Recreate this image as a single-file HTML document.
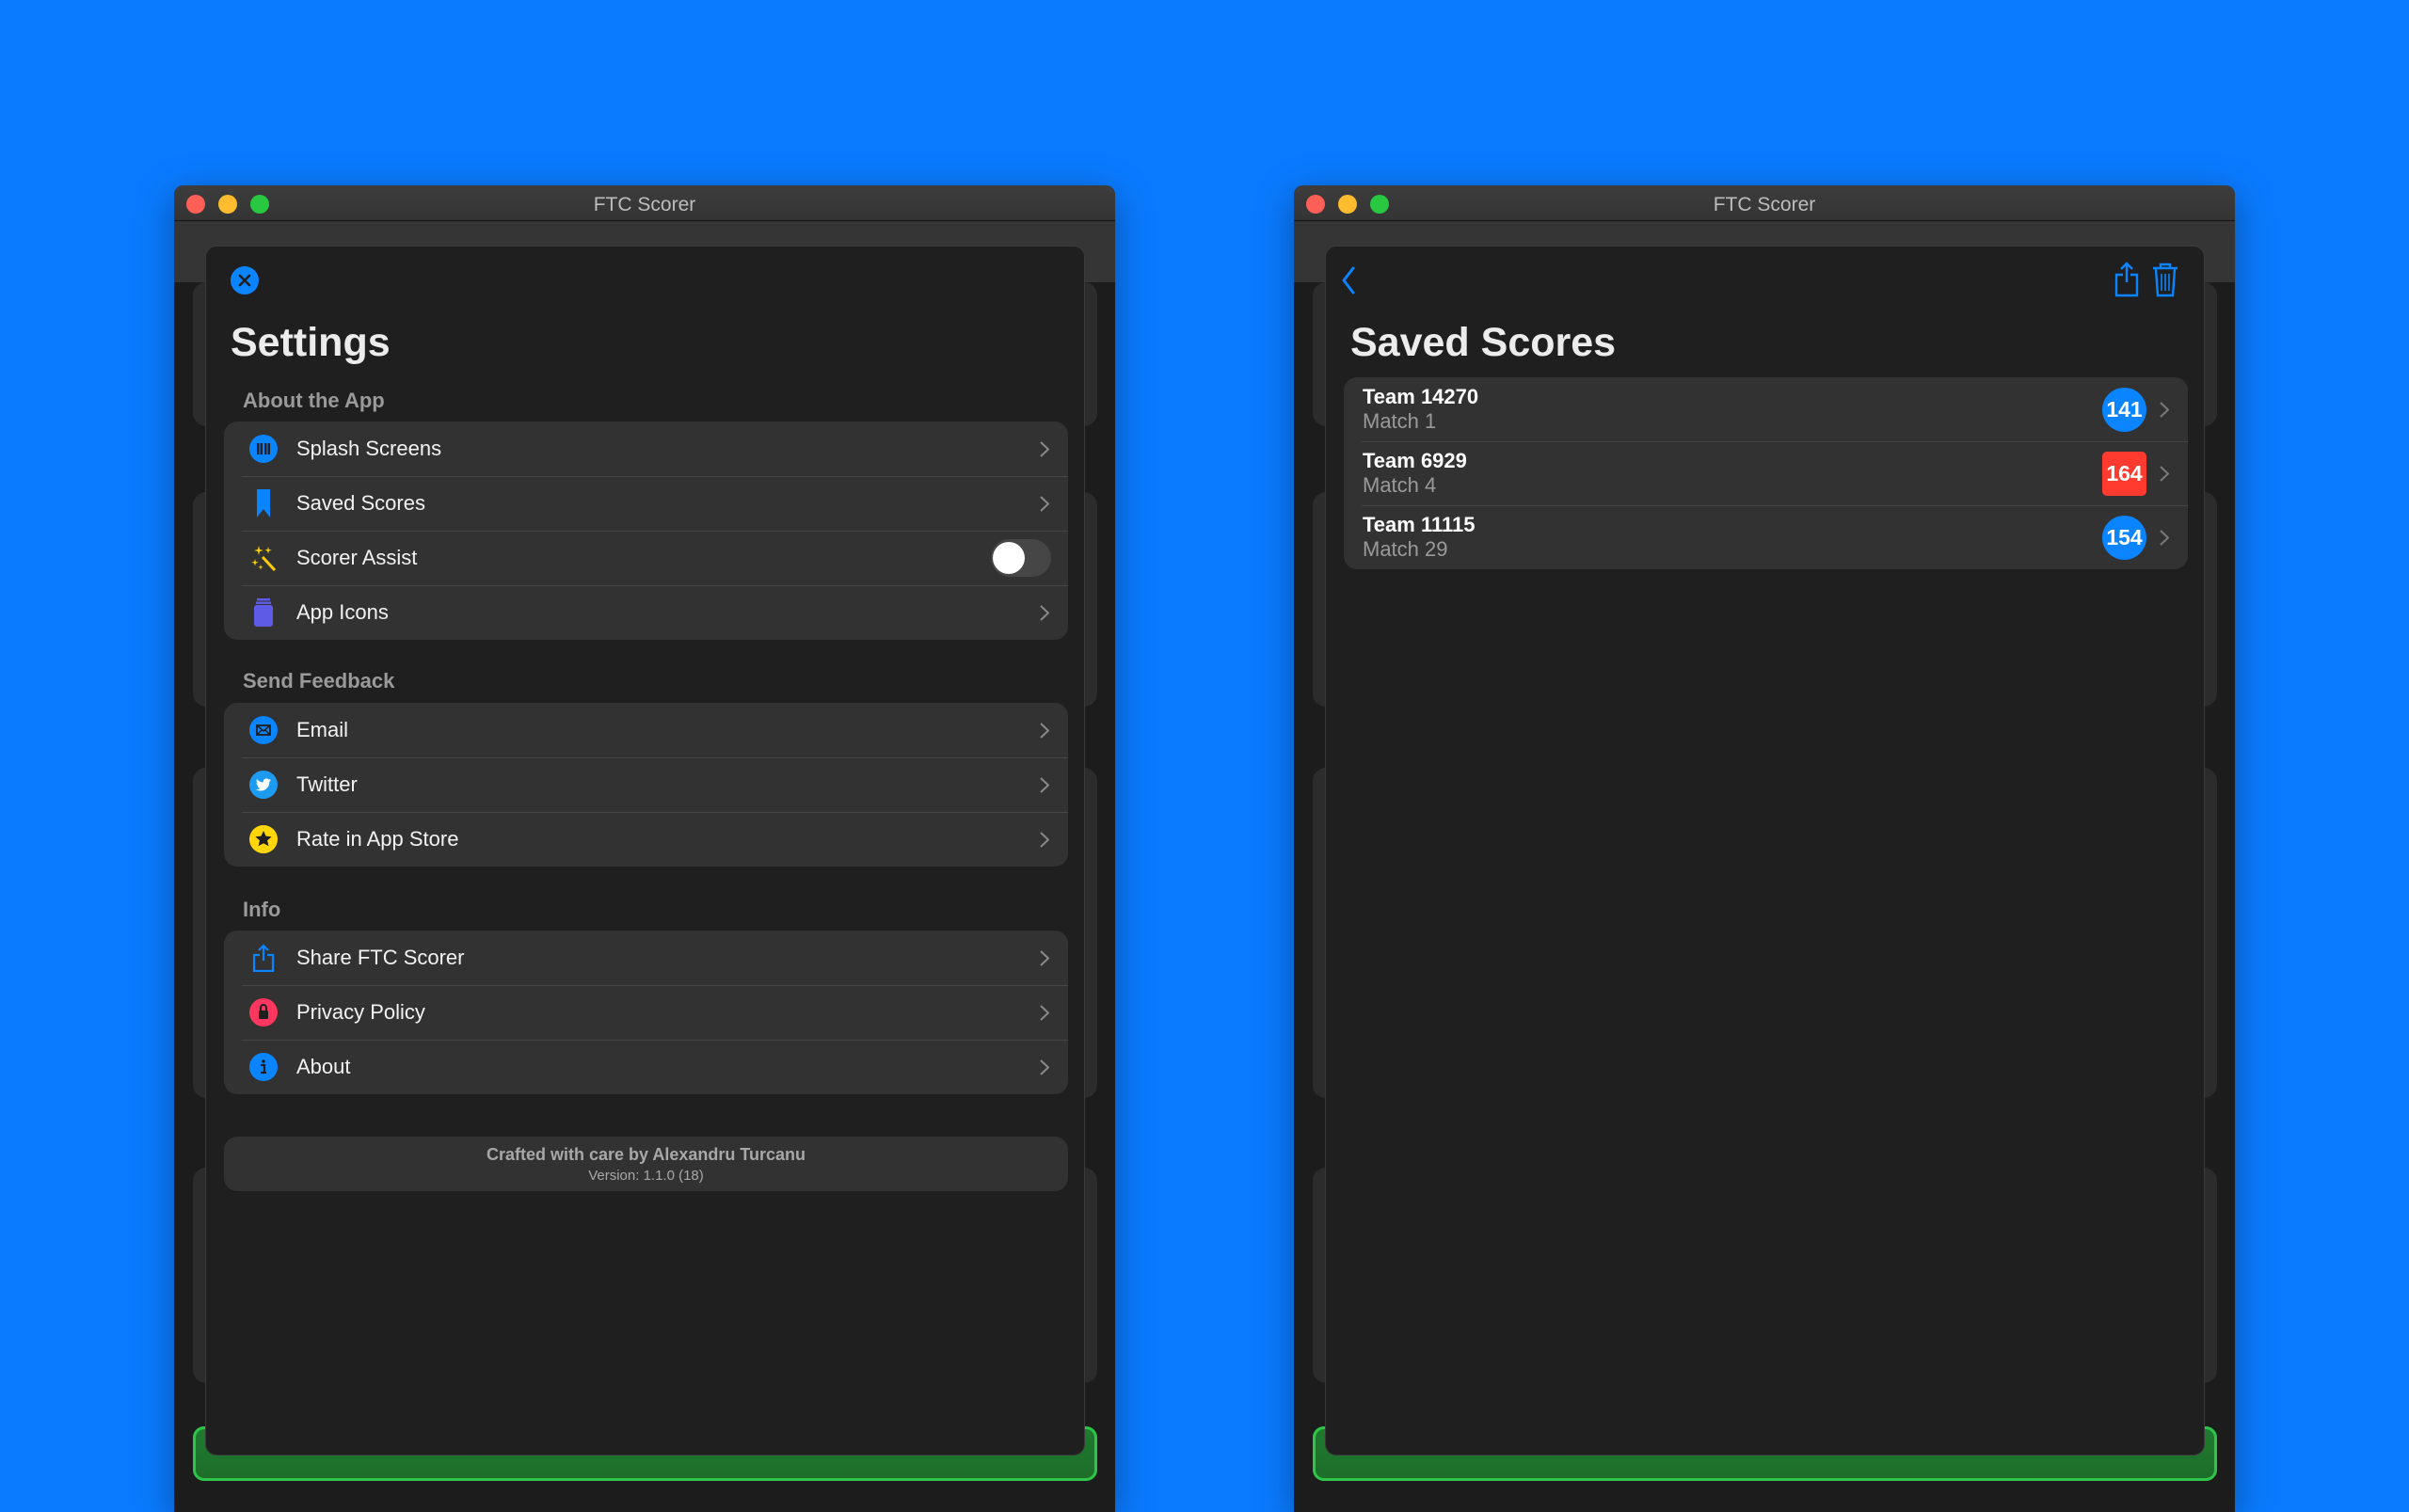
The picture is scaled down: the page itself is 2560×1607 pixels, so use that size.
<!DOCTYPE html>
<html><head><meta charset="utf-8"><style>
*{box-sizing:border-box;margin:0;padding:0}
body{width:2560px;height:1600px;background:#0a7bff;position:relative;overflow:hidden;font-family:"Liberation Sans",sans-serif}
.win{position:absolute;top:197px;width:1000px;height:1410px;background:#1c1c1c;border-radius:10px 10px 0 0;overflow:hidden;box-shadow:0 10px 40px rgba(0,0,0,.35)}
.tb{position:absolute;left:0;top:0;width:100%;height:38px;background:linear-gradient(#3d3d3d,#343434);border-bottom:1px solid #151515;color:#bdbdbd;font-size:21px;text-align:center;line-height:42px}
.dot{position:absolute;top:10px;width:20px;height:20px;border-radius:50%}
.tool{position:absolute;left:0;top:38px;width:100%;height:65px;background:#353535}
.card{position:absolute;left:20px;width:961px;background:#2c2c2c;border-radius:14px}
.green{position:absolute;left:20px;top:1319px;width:961px;height:58px;background:linear-gradient(#1f7a2e,#1d6e2a);border-radius:12px;box-shadow:inset 0 0 0 3px #2fc44a}
.sheet{position:absolute;left:33px;top:64px;width:935px;height:1286px;background:#1f1f1f;border-radius:12px;border:1px solid #3a3a3a}
.h1{position:absolute;left:26px;color:#ececec;font-weight:bold;font-size:43px}
.lab{position:absolute;left:39px;color:#9a9a9a;font-size:22px;font-weight:bold}
.grp{position:absolute;left:19px;width:897px;background:#323232;border-radius:14px;overflow:hidden}
.row{position:relative;height:58px;color:#f2f2f2;font-size:22px;line-height:58px;padding-left:77px}
.row+.row:before{content:"";position:absolute;left:19px;right:0;top:0;border-top:1px solid #454545}
.ic{position:absolute;left:27px;top:14px;width:30px;height:30px}
.chev{position:absolute;right:20px;top:21px;width:10px;height:17px}
.srow{position:relative;height:68px;padding-left:20px}
.srow+.srow:before{content:"";position:absolute;left:19px;right:0;top:0;border-top:1px solid #454545}
.t1{position:absolute;top:8px;color:#fff;font-weight:bold;font-size:22px}
.t2{position:absolute;top:34px;color:#9a9a9a;font-size:22px}
.badge{position:absolute;left:806px;top:11px;width:47px;height:47px;border-radius:50%;background:#0a84ff;color:#fff;font-weight:bold;font-size:23px;text-align:center;line-height:47px}
</style></head><body>

<!-- LEFT WINDOW -->
<div class="win" style="left:185px">
 <div class="tb">FTC Scorer
  <div class="dot" style="left:13px;background:#fe5f57"></div>
  <div class="dot" style="left:47px;background:#febc2e"></div>
  <div class="dot" style="left:81px;background:#28c840"></div>
 </div>
 <div class="tool"></div>
 <div class="card" style="top:103px;height:153px"></div>
 <div class="card" style="top:326px;height:228px"></div>
 <div class="card" style="top:619px;height:351px"></div>
 <div class="card" style="top:1044px;height:229px"></div>
 <div class="green"></div>
 <div class="sheet">
  <svg style="position:absolute;left:25px;top:20px" width="32" height="32" viewBox="0 0 32 32"><circle cx="16" cy="16" r="15" fill="#0a84ff"/><path d="M11 11L21 21M21 11L11 21" stroke="#1f1f1f" stroke-width="2.6" stroke-linecap="round"/></svg>
  <div class="h1" style="top:78px">Settings</div>
  <div class="lab" style="top:151px">About the App</div>
  <div class="grp" style="top:186px">
   <div class="row"><svg class="ic" viewBox="0 0 30 30"><circle cx="15" cy="15" r="15" fill="#0a84ff"/><path d="M8 9h6v12H8zM16 9h6v12h-6z" fill="#1f1f1f" /><path d="M11 9v12M19 9v12" stroke="#0a84ff" stroke-width="1.2"/></svg>Splash Screens<svg class="chev" viewBox="0 0 10 17"><path d="M1 1l8 7.5L1 16" fill="none" stroke="#8a8a8a" stroke-width="2"/></svg></div>
   <div class="row"><svg class="ic" viewBox="0 0 30 30"><path d="M8 0h14v30l-7-9-7 9z" fill="#0a84ff"/></svg>Saved Scores<svg class="chev" viewBox="0 0 10 17"><path d="M1 1l8 7.5L1 16" fill="none" stroke="#8a8a8a" stroke-width="2"/></svg></div>
   <div class="row"><svg class="ic" viewBox="0 0 30 30"><path d="M14 14l13 14" stroke="#ffcc00" stroke-width="3"/><g fill="#ffd60a"><path d="M10 2l1 4 4 1-4 1-1 4-1-4-4-1 4-1z"/><path d="M20 3l.8 3 3 .8-3 .8-.8 3-.8-3-3-.8 3-.8z"/><path d="M6 16l.8 3 3 .8-3 .8-.8 3-.8-3-3-.8 3-.8z"/><path d="M12 22l.6 2.2 2.2.6-2.2.6-.6 2.2-.6-2.2-2.2-.6 2.2-.6z"/></g></svg>Scorer Assist
    <div style="position:absolute;right:18px;top:9px;width:64px;height:40px;border-radius:20px;background:#464646"><div style="position:absolute;left:2px;top:3px;width:34px;height:34px;border-radius:50%;background:#fff"></div></div></div>
   <div class="row"><svg class="ic" viewBox="0 0 30 30"><rect x="5" y="7" width="20" height="23" rx="3" fill="#5e5ce6"/><rect x="8" y="0" width="14" height="2.5" fill="#5e5ce6"/><rect x="7" y="3.5" width="16" height="2.5" fill="#5e5ce6"/></svg>App Icons<svg class="chev" viewBox="0 0 10 17"><path d="M1 1l8 7.5L1 16" fill="none" stroke="#8a8a8a" stroke-width="2"/></svg></div>
  </div>
  <div class="lab" style="top:449px">Send Feedback</div>
  <div class="grp" style="top:485px">
   <div class="row"><svg class="ic" viewBox="0 0 30 30"><circle cx="15" cy="15" r="15" fill="#0a84ff"/><rect x="8" y="10" width="14" height="10" fill="none" stroke="#1f1f1f" stroke-width="1.8"/><path d="M8 10l7 6 7-6M8 20l5-5M22 20l-5-5" fill="none" stroke="#1f1f1f" stroke-width="1.5"/></svg>Email<svg class="chev" viewBox="0 0 10 17"><path d="M1 1l8 7.5L1 16" fill="none" stroke="#8a8a8a" stroke-width="2"/></svg></div>
   <div class="row"><svg class="ic" viewBox="0 0 30 30"><circle cx="15" cy="15" r="15" fill="#1d9bf0"/><path d="M23 10c-.6.3-1.2.4-1.9.5.7-.4 1.2-1 1.4-1.8-.6.4-1.3.6-2.1.8a3.3 3.3 0 0 0-5.600 3c-2.7-.1-5.100-1.400-6.800-3.400-.9 1.5-.4 3.4 1 4.4-.5 0-1-.2-1.5-.4 0 1.6 1.1 3 2.6 3.2-.5.1-1 .2-1.5.1.4 1.3 1.6 2.3 3.1 2.3A6.6 6.6 0 0 1 7 20c1.5.9 3.2 1.5 5 1.5 6.1 0 9.5-5.1 9.3-9.7.7-.5 1.2-1 1.7-1.8z" fill="#fff"/></svg>Twitter<svg class="chev" viewBox="0 0 10 17"><path d="M1 1l8 7.5L1 16" fill="none" stroke="#8a8a8a" stroke-width="2"/></svg></div>
   <div class="row"><svg class="ic" viewBox="0 0 30 30"><circle cx="15" cy="15" r="15" fill="#ffd60a"/><path d="M15 6l2.6 5.6 6 .6-4.5 4 1.3 6L15 19.2 9.6 22.2l1.3-6-4.5-4 6-.6z" fill="#1f1f1f"/></svg>Rate in App Store<svg class="chev" viewBox="0 0 10 17"><path d="M1 1l8 7.5L1 16" fill="none" stroke="#8a8a8a" stroke-width="2"/></svg></div>
  </div>
  <div class="lab" style="top:692px">Info</div>
  <div class="grp" style="top:727px">
   <div class="row"><svg class="ic" viewBox="0 0 30 30"><path d="M15 2v16M10 7l5-5 5 5" fill="none" stroke="#0a84ff" stroke-width="2.2"/><path d="M11 12H5v17h20V12h-6" fill="none" stroke="#0a84ff" stroke-width="2.2"/></svg>Share FTC Scorer<svg class="chev" viewBox="0 0 10 17"><path d="M1 1l8 7.5L1 16" fill="none" stroke="#8a8a8a" stroke-width="2"/></svg></div>
   <div class="row"><svg class="ic" viewBox="0 0 30 30"><circle cx="15" cy="15" r="15" fill="#ff375f"/><rect x="10" y="13" width="10" height="9" rx="1.5" fill="#1f1f1f"/><path d="M12 13v-3a3 3 0 0 1 6 0v3" fill="none" stroke="#1f1f1f" stroke-width="2"/></svg>Privacy Policy<svg class="chev" viewBox="0 0 10 17"><path d="M1 1l8 7.5L1 16" fill="none" stroke="#8a8a8a" stroke-width="2"/></svg></div>
   <div class="row"><svg class="ic" viewBox="0 0 30 30"><circle cx="15" cy="15" r="15" fill="#0a84ff"/><circle cx="15" cy="9" r="1.8" fill="#1f1f1f"/><path d="M12 13h4v8h2M12 21h6" fill="none" stroke="#1f1f1f" stroke-width="2.2"/></svg>About<svg class="chev" viewBox="0 0 10 17"><path d="M1 1l8 7.5L1 16" fill="none" stroke="#8a8a8a" stroke-width="2"/></svg></div>
  </div>
  <div class="grp" style="top:946px;height:58px;text-align:center;color:#a8a8a8">
   <div style="font-weight:bold;font-size:18px;margin-top:9px">Crafted with care by Alexandru Turcanu</div>
   <div style="font-size:15px;margin-top:3px">Version: 1.1.0 (18)</div>
  </div>
 </div>
</div>

<!-- RIGHT WINDOW -->
<div class="win" style="left:1375px">
 <div class="tb">FTC Scorer
  <div class="dot" style="left:13px;background:#fe5f57"></div>
  <div class="dot" style="left:47px;background:#febc2e"></div>
  <div class="dot" style="left:81px;background:#28c840"></div>
 </div>
 <div class="tool"></div>
 <div class="card" style="top:103px;height:153px"></div>
 <div class="card" style="top:326px;height:228px"></div>
 <div class="card" style="top:619px;height:351px"></div>
 <div class="card" style="top:1044px;height:229px"></div>
 <div class="green"></div>
 <div class="sheet">
  <svg style="position:absolute;left:16px;top:20px" width="16" height="32" viewBox="0 0 16 32"><path d="M13 3L3 16l10 13" fill="none" stroke="#0a84ff" stroke-width="3" stroke-linecap="round" stroke-linejoin="round"/></svg>
  <svg style="position:absolute;left:837px;top:16px" width="28" height="38" viewBox="0 0 28 38"><path d="M14 2v20M8 8l6-6 6 6" fill="none" stroke="#0a84ff" stroke-width="2.4"/><path d="M10 14H3v22h22V14h-7" fill="none" stroke="#0a84ff" stroke-width="2.4"/></svg>
  <svg style="position:absolute;left:877px;top:16px" width="30" height="38" viewBox="0 0 30 38"><path d="M2 7h26M10 7V3h10v4" fill="none" stroke="#0a84ff" stroke-width="2.4"/><path d="M5 8l2 28h16l2-28" fill="none" stroke="#0a84ff" stroke-width="2.4"/><path d="M11 13v18M15 13v18M19 13v18" stroke="#0a84ff" stroke-width="1.6"/></svg>
  <div class="h1" style="top:78px">Saved Scores</div>
  <div class="grp" style="top:139px">
   <div class="srow"><div class="t1">Team 14270</div><div class="t2">Match 1</div><div class="badge">141</div><svg class="chev" style="top:26px" viewBox="0 0 10 17"><path d="M1 1l8 7.5L1 16" fill="none" stroke="#7a7a7a" stroke-width="2"/></svg></div>
   <div class="srow"><div class="t1">Team 6929</div><div class="t2">Match 4</div><div class="badge" style="background:#ff3b30;border-radius:5px">164</div><svg class="chev" style="top:26px" viewBox="0 0 10 17"><path d="M1 1l8 7.5L1 16" fill="none" stroke="#7a7a7a" stroke-width="2"/></svg></div>
   <div class="srow"><div class="t1">Team 11115</div><div class="t2">Match 29</div><div class="badge">154</div><svg class="chev" style="top:26px" viewBox="0 0 10 17"><path d="M1 1l8 7.5L1 16" fill="none" stroke="#7a7a7a" stroke-width="2"/></svg></div>
  </div>
 </div>
</div>
</body></html>
